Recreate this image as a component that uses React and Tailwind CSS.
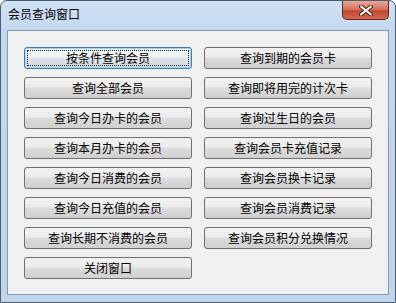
import React from 'react';

const leftButtons = [
    '按条件查询会员',
    '查询全部会员',
    '查询今日办卡的会员',
    '查询本月办卡的会员',
    '查询今日消费的会员',
    '查询今日充值的会员',
    '查询长期不消费的会员',
    '关闭窗口',
];

const rightButtons = [
    '查询到期的会员卡',
    '查询即将用完的计次卡',
    '查询过生日的会员',
    '查询会员卡充值记录',
    '查询会员换卡记录',
    '查询会员消费记录',
    '查询会员积分兑换情况',
];

const WinButton = ({ label, focused }) => (
    <button
        className={
            focused
                ? 'h-[22px] w-[168px] rounded-[3px] border border-[#3c7fb1] bg-[linear-gradient(#f4f8fb_0%,#edf2f5_45%,#dde3e7_50%,#d2d8dc_100%)] p-[2px] text-[12px] leading-none text-black shadow-[inset_0_0_0_1px_#9fd5f3]'
                : 'h-[22px] w-[168px] rounded-[3px] border border-[#707070] bg-[linear-gradient(#f2f2f2_0%,#ebebeb_45%,#dddddd_50%,#cfcfcf_100%)] p-[2px] text-[12px] leading-none text-black'
        }
    >
        <span
            className={
                focused
                    ? 'flex h-full w-full items-center justify-center border border-dotted border-[#222]'
                    : 'flex h-full w-full items-center justify-center'
            }
        >
            {label}
        </span>
    </button>
);

const App = () => {
    return (
        <div className="w-[396px] h-[303px] font-['Noto_Sans_CJK_SC',sans-serif]">
            <div className="flex h-full w-full flex-col rounded-t-[7px] border border-[#4e5d6c] bg-[linear-gradient(#d0e2f5_0px,#c3d8ef_30px,#bfd5ec_100%)] px-[6px] pb-[7px]">
                <div className="flex h-[29px] shrink-0 items-start justify-between">
                    <span className="pl-[1px] pt-[6px] text-[12px] leading-[14px] text-black">会员查询窗口</span>
                    <div className="flex h-[19px] w-[47px] items-center justify-center rounded-b-[5px] border border-t-0 border-[#5b2a24] bg-[linear-gradient(#e9a99b_0%,#d6735f_45%,#c24a33_55%,#d3664e_100%)]">
                        <svg width="14" height="11" viewBox="0 0 14 11">
                            <path d="M2 1.5 L12 9.5 M12 1.5 L2 9.5" stroke="#4b1d16" strokeWidth="4" strokeLinecap="round" />
                            <path d="M2 1.5 L12 9.5 M12 1.5 L2 9.5" stroke="#ffffff" strokeWidth="2.2" strokeLinecap="round" />
                        </svg>
                    </div>
                </div>
                <div className="flex-1 border border-[#8397ae] bg-[#f0f0f0]">
                    <div className="flex gap-x-[12px] pl-[16px] pt-[16px]">
                        <div className="flex flex-col gap-y-[8px]">
                            {leftButtons.map((label, i) => (
                                <WinButton key={label} label={label} focused={i === 0} />
                            ))}
                        </div>
                        <div className="flex flex-col gap-y-[8px]">
                            {rightButtons.map((label) => (
                                <WinButton key={label} label={label} />
                            ))}
                        </div>
                    </div>
                </div>
            </div>
        </div>
    );
};

export default App;
